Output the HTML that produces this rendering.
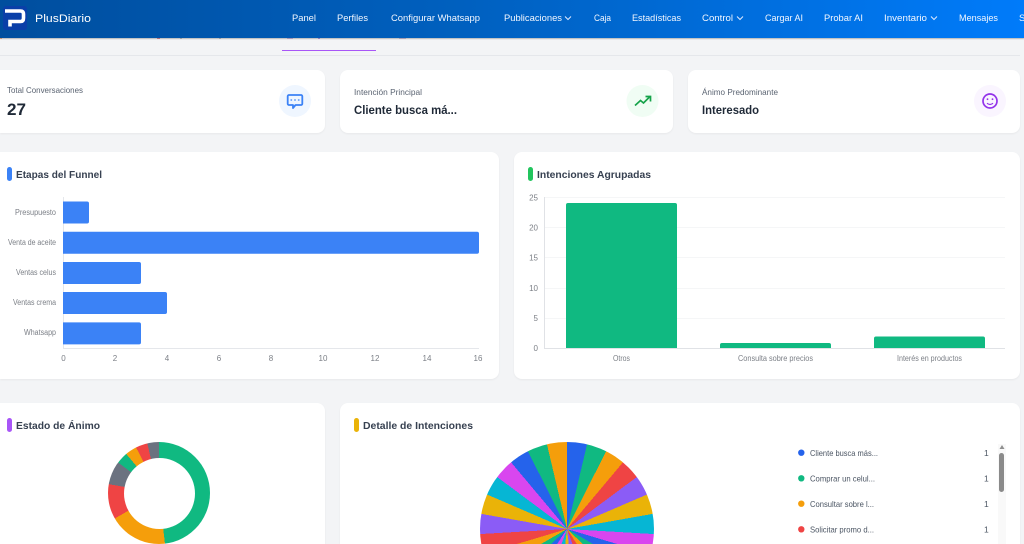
<!DOCTYPE html>
<html lang="es">
<head>
<meta charset="utf-8">
<title>PlusDiario</title>
<style>
html,body{margin:0;padding:0;width:1024px;height:544px;overflow:hidden;background:#f3f4f6;font-family:"Liberation Sans",sans-serif}
#wrap{position:relative;width:1024px;height:544px;overflow:hidden;background:#f3f4f6}
.abs{position:absolute}
.hdr{position:absolute;left:0;top:0;width:1024px;height:37.500px;background:linear-gradient(90deg,#004e9e 0%,#0060bf 45%,#007bfa 100%);box-shadow:0 1px 1px rgba(0,0,0,.25);z-index:3}
.card{position:absolute;background:#fff;border-radius:8px;box-shadow:0 1px 2px rgba(0,0,0,.05)}
.pie{position:absolute;border-radius:50%}
svg.top{position:absolute;left:0;top:0;z-index:4;display:block}
svg text{font-family:"Liberation Sans",sans-serif;filter:blur(.25px)}
.nav{font-size:9.500px;fill:#f2f7ff}
.lbl{font-size:8px;fill:#7b7f86}
.sub{font-size:8.500px;fill:#5b6472}
.val{font-size:12px;font-weight:700;fill:#1f2937}
.ttl{font-size:10.500px;font-weight:700;fill:#374151}
.leg{font-size:8.500px;fill:#4b5563}
</style>
</head>
<body>
<div id="wrap">
<div class="hdr"></div>

<div class="abs" style="left:0;top:38px;width:2px;height:1px;background:#f0b48c"></div>
<div class="abs" style="left:157px;top:38px;width:3px;height:1px;background:#e08a9c"></div>
<div class="abs" style="left:180px;top:38px;width:2px;height:1px;background:#c4c7cc"></div>
<div class="abs" style="left:219px;top:38px;width:2px;height:1px;background:#c4c7cc"></div>
<div class="abs" style="left:287px;top:38px;width:6px;height:1px;background:#cdb9e2"></div>
<div class="abs" style="left:318px;top:38px;width:2px;height:1px;background:#b99ae8"></div>
<div class="abs" style="left:399px;top:38px;width:7px;height:1px;background:#cfc4dc"></div>
<div class="abs" style="left:282px;top:50px;width:94px;height:1px;background:#a855f7"></div>
<div class="abs" style="left:0;top:55px;width:1020px;height:1px;background:#e5e7eb"></div>

<div class="card" style="left:0;top:70px;width:325px;height:63px;border-radius:0 8px 8px 0"></div>
<div class="card" style="left:340px;top:70px;width:333px;height:63px"></div>
<div class="card" style="left:688px;top:70px;width:332px;height:63px"></div>

<div class="card" style="left:0;top:152px;width:499px;height:227px;border-radius:0 8px 8px 0"></div>
<div class="card" style="left:514px;top:152px;width:506px;height:227px"></div>

<div class="card" style="left:0;top:403px;width:325px;height:141px;border-radius:0 8px 0 0"></div>
<div class="card" style="left:340px;top:403px;width:680px;height:141px;border-radius:8px 8px 0 0"></div>

<div class="pie" style="left:108px;top:442px;width:102px;height:102px;background:conic-gradient(#10b981 0 173.300deg,#f59e0b 173.300deg 240deg,#ef4444 240deg 280deg,#6b7280 280deg 306.700deg,#10b981 306.700deg 320deg,#f59e0b 320deg 333.300deg,#ef4444 333.300deg 346.700deg,#6b7280 346.700deg 360deg)"></div>
<div class="pie" style="left:123.500px;top:458px;width:71px;height:71px;background:#fff"></div>

<div class="abs" style="left:480px;top:442px;width:174px;height:102px;overflow:hidden">
<div class="pie" style="left:0;top:0;width:174px;height:174px;background:conic-gradient(#2563eb 0 13.330deg,#10b981 13.330deg 26.670deg,#f59e0b 26.670deg 40deg,#ef4444 40deg 53.330deg,#8b5cf6 53.330deg 66.670deg,#eab308 66.670deg 80deg,#06b6d4 80deg 93.330deg,#d946ef 93.330deg 106.670deg,#2563eb 106.670deg 120deg,#10b981 120deg 133.330deg,#f59e0b 133.330deg 146.670deg,#ef4444 146.670deg 160deg,#8b5cf6 160deg 173.330deg,#eab308 173.330deg 186.670deg,#06b6d4 186.670deg 200deg,#d946ef 200deg 213.330deg,#2563eb 213.330deg 226.670deg,#10b981 226.670deg 240deg,#f59e0b 240deg 253.330deg,#ef4444 253.330deg 266.670deg,#8b5cf6 266.670deg 280deg,#eab308 280deg 293.330deg,#06b6d4 293.330deg 306.670deg,#d946ef 306.670deg 320deg,#2563eb 320deg 333.330deg,#10b981 333.330deg 346.670deg,#f59e0b 346.670deg 360deg)"></div>
</div>

<svg class="top" width="1024" height="544" viewBox="0 0 1024 544" xmlns="http://www.w3.org/2000/svg">
  <!-- logo -->
  <rect x="3" y="6" width="24" height="24" rx="3" fill="#0a3fa8"/>
  <path d="M5 11H20.500Q23.500 11 23.500 14V18Q23.500 21.500 20.500 21.500H10V26.500" fill="none" stroke="#fff" stroke-width="3.600"/>
  <text x="35" y="22" textLength="56" lengthAdjust="spacingAndGlyphs" font-size="11" fill="#fff">PlusDiario</text>

  <!-- nav -->
  <text class="nav" x="292" y="21" textLength="24" lengthAdjust="spacingAndGlyphs">Panel</text>
  <text class="nav" x="337" y="21" textLength="31" lengthAdjust="spacingAndGlyphs">Perfiles</text>
  <text class="nav" x="391" y="21" textLength="89" lengthAdjust="spacingAndGlyphs">Configurar Whatsapp</text>
  <text class="nav" x="504" y="21" textLength="58" lengthAdjust="spacingAndGlyphs">Publicaciones</text>
  <path d="M565 16.500l3 3 3-3" fill="none" stroke="#dfeaff" stroke-width="1"/>
  <text class="nav" x="594" y="21" textLength="17" lengthAdjust="spacingAndGlyphs">Caja</text>
  <text class="nav" x="632" y="21" textLength="49" lengthAdjust="spacingAndGlyphs">Estadísticas</text>
  <text class="nav" x="702" y="21" textLength="31" lengthAdjust="spacingAndGlyphs">Control</text>
  <path d="M737 16.500l3 3 3-3" fill="none" stroke="#dfeaff" stroke-width="1"/>
  <text class="nav" x="765" y="21" textLength="38" lengthAdjust="spacingAndGlyphs">Cargar AI</text>
  <text class="nav" x="824" y="21" textLength="39" lengthAdjust="spacingAndGlyphs">Probar AI</text>
  <text class="nav" x="884" y="21" textLength="43" lengthAdjust="spacingAndGlyphs">Inventario</text>
  <path d="M931 16.500l3 3 3-3" fill="none" stroke="#dfeaff" stroke-width="1"/>
  <text class="nav" x="959" y="21" textLength="39" lengthAdjust="spacingAndGlyphs">Mensajes</text>
  <text class="nav" x="1019" y="21">S</text>

  <!-- stat cards -->
  <text class="sub" x="7" y="93" textLength="76" lengthAdjust="spacingAndGlyphs">Total Conversaciones</text>
  <text x="7" y="115" textLength="19" lengthAdjust="spacingAndGlyphs" font-size="17" font-weight="700" fill="#1f2937">27</text>
  <circle cx="295" cy="101" r="16" fill="#eff6ff"/>
  <path d="M289 95h12a1.300 1.300 0 0 1 1.300 1.300v7.400a1.300 1.300 0 0 1-1.300 1.300h-5.500l-2.500 3v-3h-4a1.300 1.300 0 0 1-1.300-1.300v-7.400A1.300 1.300 0 0 1 289 95z" fill="none" stroke="#3b82f6" stroke-width="1.800" stroke-linejoin="round"/>
  <path d="M290.500 100h1.600M294.200 100h1.600M297.900 100h1.600" stroke="#3b82f6" stroke-width="1.300"/>

  <text class="sub" x="354" y="95" textLength="68" lengthAdjust="spacingAndGlyphs">Intención Principal</text>
  <text class="val" x="354" y="114" textLength="103" lengthAdjust="spacingAndGlyphs">Cliente busca má...</text>
  <circle cx="642.500" cy="101" r="16" fill="#f0fdf4"/>
  <path d="M635 105.500l5.500-5 3 2.500 6.500-6.500" fill="none" stroke="#16a34a" stroke-width="1.700"/>
  <path d="M645.500 96.500h5v5" fill="none" stroke="#16a34a" stroke-width="1.700"/>

  <text class="sub" x="702" y="95" textLength="76" lengthAdjust="spacingAndGlyphs">Ánimo Predominante</text>
  <text class="val" x="702" y="114" textLength="57" lengthAdjust="spacingAndGlyphs">Interesado</text>
  <circle cx="990" cy="101" r="16" fill="#faf5ff"/>
  <circle cx="990" cy="101" r="7" fill="none" stroke="#9333ea" stroke-width="1.700"/>
  <circle cx="987.500" cy="99.200" r=".9" fill="#9333ea"/>
  <circle cx="992.500" cy="99.200" r=".9" fill="#9333ea"/>
  <path d="M987 103.200q3 2.600 6 0" fill="none" stroke="#9333ea" stroke-width="1.200"/>

  <!-- titles -->
  <rect x="7" y="167" width="5" height="14" rx="2.500" fill="#3b82f6"/>
  <text class="ttl" x="16" y="178" textLength="86" lengthAdjust="spacingAndGlyphs">Etapas del Funnel</text>
  <rect x="528" y="167" width="5" height="14" rx="2.500" fill="#22c55e"/>
  <text class="ttl" x="537" y="178" textLength="114" lengthAdjust="spacingAndGlyphs">Intenciones Agrupadas</text>
  <rect x="7" y="418" width="5" height="14" rx="2.500" fill="#a855f7"/>
  <text class="ttl" x="16" y="429" textLength="84" lengthAdjust="spacingAndGlyphs">Estado de Ánimo</text>
  <rect x="354" y="418" width="5" height="14" rx="2.500" fill="#eab308"/>
  <text class="ttl" x="363" y="429" textLength="110" lengthAdjust="spacingAndGlyphs">Detalle de Intenciones</text>

  <!-- funnel chart -->
  <path d="M63.500 197V348.500H479" fill="none" stroke="#e5e7eb" stroke-width="1"/>
  <g fill="#3b82f6">
    <path d="M63 201.500h24a2 2 0 0 1 2 2v18a2 2 0 0 1-2 2h-24z"/>
    <path d="M63 231.700h414a2 2 0 0 1 2 2v18a2 2 0 0 1-2 2h-414z"/>
    <path d="M63 262h76a2 2 0 0 1 2 2v18a2 2 0 0 1-2 2h-76z"/>
    <path d="M63 292h102a2 2 0 0 1 2 2v18a2 2 0 0 1-2 2h-102z"/>
    <path d="M63 322.400h76a2 2 0 0 1 2 2v18a2 2 0 0 1-2 2h-76z"/>
  </g>
  <g text-anchor="end">
    <text class="lbl" x="56" y="215" textLength="41" lengthAdjust="spacingAndGlyphs">Presupuesto</text>
    <text class="lbl" x="56" y="245" textLength="48" lengthAdjust="spacingAndGlyphs">Venta de aceite</text>
    <text class="lbl" x="56" y="275" textLength="40" lengthAdjust="spacingAndGlyphs">Ventas celus</text>
    <text class="lbl" x="56" y="305" textLength="43" lengthAdjust="spacingAndGlyphs">Ventas crema</text>
    <text class="lbl" x="56" y="335" textLength="32" lengthAdjust="spacingAndGlyphs">Whatsapp</text>
  </g>
  <g text-anchor="middle">
    <text class="lbl" x="63.500" y="361">0</text>
    <text class="lbl" x="115" y="361">2</text>
    <text class="lbl" x="167" y="361">4</text>
    <text class="lbl" x="219" y="361">6</text>
    <text class="lbl" x="271" y="361">8</text>
    <text class="lbl" x="323" y="361">10</text>
    <text class="lbl" x="375" y="361">12</text>
    <text class="lbl" x="427" y="361">14</text>
    <text class="lbl" x="478" y="361">16</text>
  </g>

  <!-- intentions chart -->
  <g stroke="#f5f6f7" stroke-width="1">
    <path d="M545 197.500H1005M545 227.500H1005M545 257.500H1005M545 288.500H1005M545 318.500H1005"/>
  </g>
  <path d="M544.500 197V348.500H1005" fill="none" stroke="#e0e2e6" stroke-width="1"/>
  <g fill="#10b981">
    <path d="M566 348v-143a2 2 0 0 1 2-2h107a2 2 0 0 1 2 2v143z"/>
    <path d="M720 348v-3a2 2 0 0 1 2-2h107a2 2 0 0 1 2 2v3z"/>
    <path d="M874 348v-9.500a2 2 0 0 1 2-2h107a2 2 0 0 1 2 2v9.500z"/>
  </g>
  <g text-anchor="end">
    <text class="lbl" x="538" y="200.500">25</text>
    <text class="lbl" x="538" y="230.500">20</text>
    <text class="lbl" x="538" y="260.500">15</text>
    <text class="lbl" x="538" y="291">10</text>
    <text class="lbl" x="538" y="321">5</text>
    <text class="lbl" x="538" y="351">0</text>
  </g>
  <text class="lbl" x="613" y="361" textLength="17" lengthAdjust="spacingAndGlyphs">Otros</text>
  <text class="lbl" x="738" y="361" textLength="75" lengthAdjust="spacingAndGlyphs">Consulta sobre precios</text>
  <text class="lbl" x="897" y="361" textLength="65" lengthAdjust="spacingAndGlyphs">Interés en productos</text>

  <!-- legend -->
  <circle cx="801.300" cy="452.700" r="3.200" fill="#2563eb"/>
  <text class="leg" x="810" y="456" textLength="68" lengthAdjust="spacingAndGlyphs">Cliente busca más...</text>
  <text class="leg" x="984" y="456">1</text>
  <circle cx="801.300" cy="478.300" r="3.200" fill="#10b981"/>
  <text class="leg" x="810" y="481.500" textLength="65" lengthAdjust="spacingAndGlyphs">Comprar un celul...</text>
  <text class="leg" x="984" y="481.500">1</text>
  <circle cx="801.300" cy="503.700" r="3.200" fill="#f59e0b"/>
  <text class="leg" x="810" y="507" textLength="64" lengthAdjust="spacingAndGlyphs">Consultar sobre l...</text>
  <text class="leg" x="984" y="507">1</text>
  <circle cx="801.300" cy="529.300" r="3.200" fill="#ef4444"/>
  <text class="leg" x="810" y="532.500" textLength="64" lengthAdjust="spacingAndGlyphs">Solicitar promo d...</text>
  <text class="leg" x="984" y="532.500">1</text>

  <!-- scrollbar -->
  <rect x="998" y="444" width="8" height="100" fill="#f9f9f9"/>
  <path d="M1002 445l2.500 4h-5z" fill="#8f8f8f"/>
  <rect x="999" y="453" width="5" height="39" rx="2.500" fill="#8a8a8a"/>
</svg>
</div>
</body>
</html>
